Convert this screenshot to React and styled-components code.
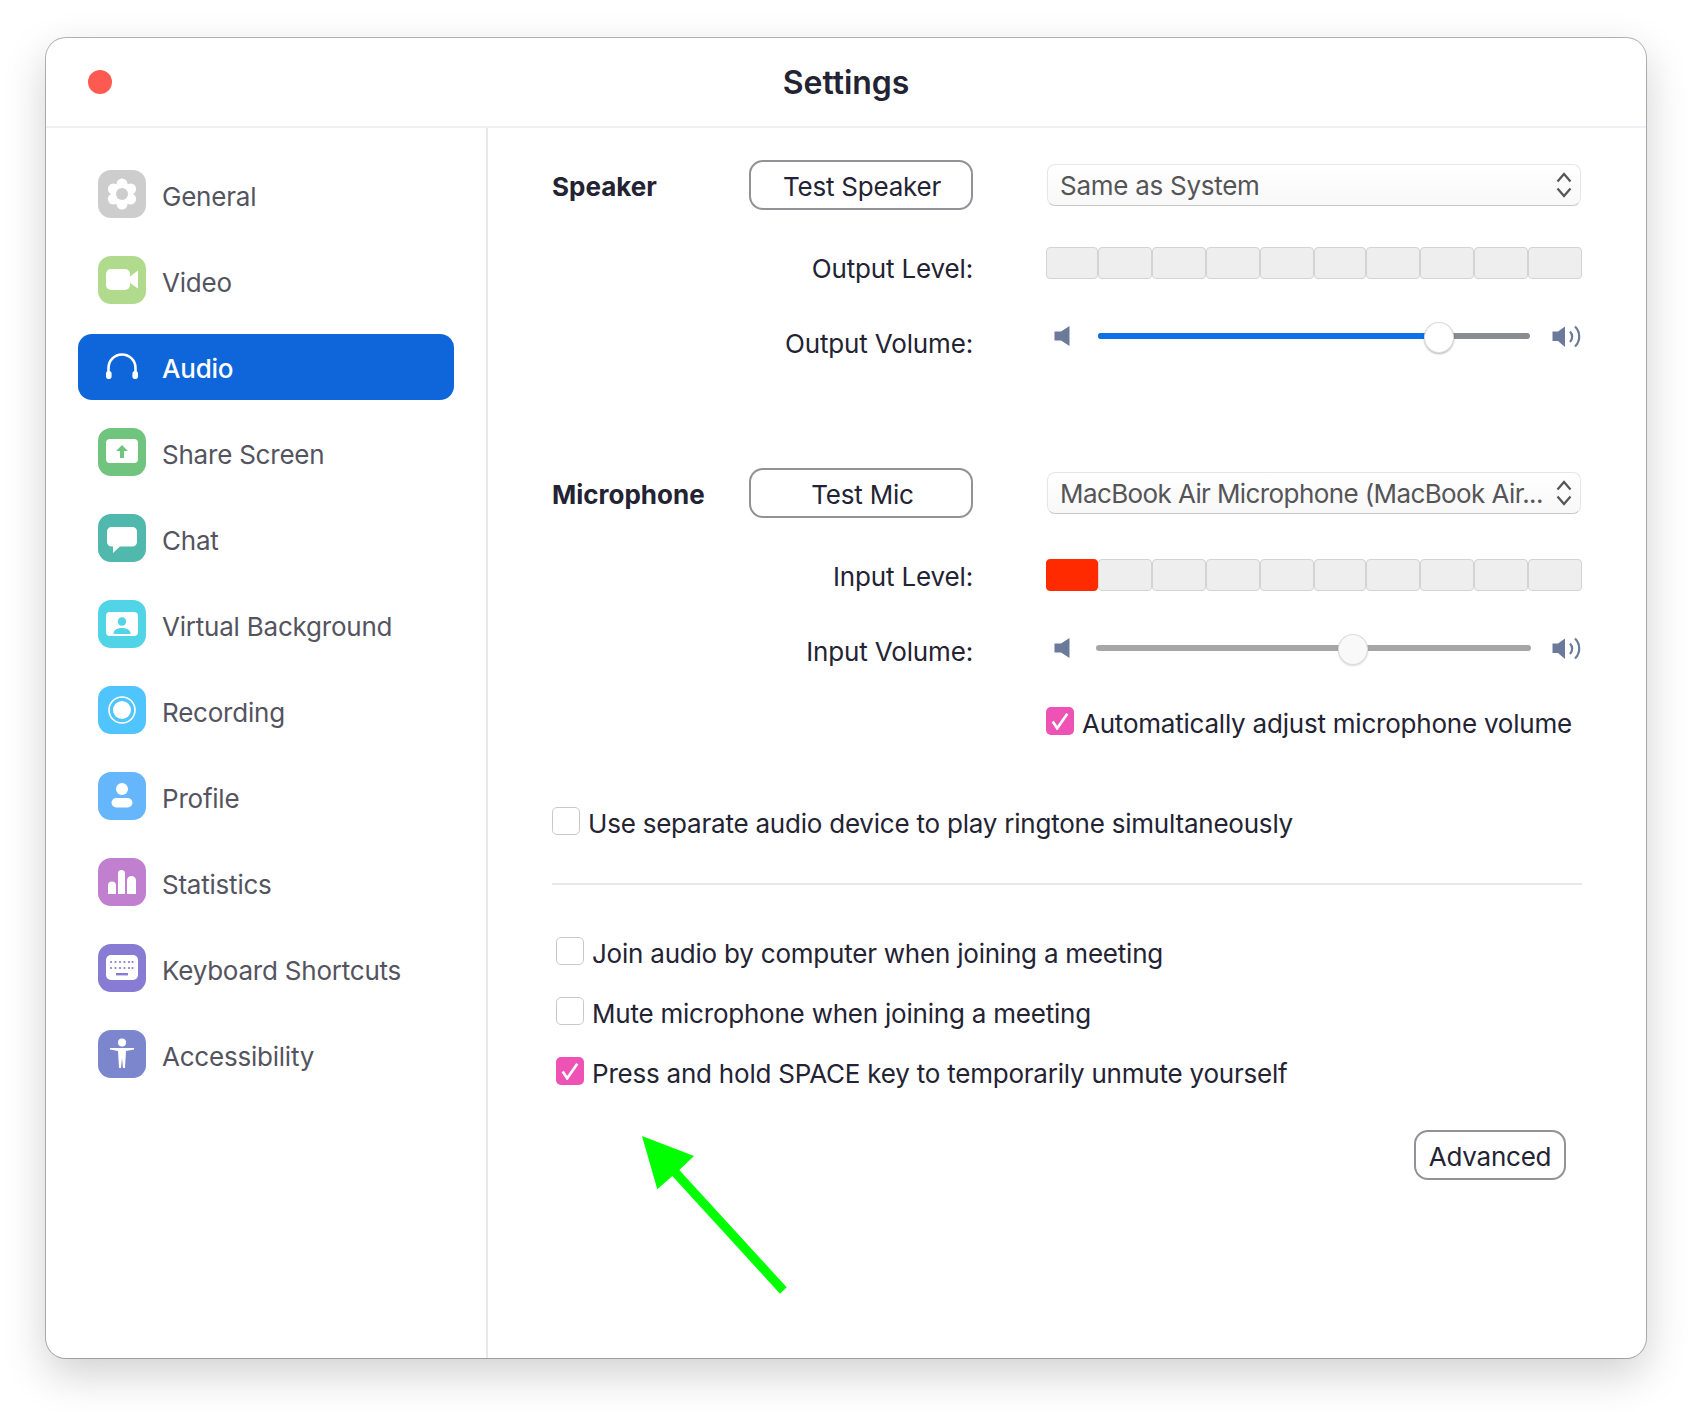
import React from 'react'
import styled, { createGlobalStyle } from 'styled-components'

const GlobalStyle = createGlobalStyle`
  html, body {
    margin: 0;
    padding: 0;
    background: #fff;
  }
  body {
    font-family: Inter, "Noto Sans", sans-serif;
    -webkit-font-smoothing: antialiased;
  }
`

const Page = styled.div`
  position: relative;
  width: 1692px;
  height: 1412px;
  padding: 38px 0 0 46px;
  box-sizing: border-box;
  overflow: hidden;
`

const Window = styled.div`
  width: 1600px;
  height: 1320px;
  background: #fff;
  border-radius: 20px;
  box-shadow: 0 0 0 1px rgba(0, 0, 0, 0.28), 0 16px 44px rgba(0, 0, 0, 0.19);
  display: flex;
  flex-direction: column;
`

const TitleBar = styled.header`
  position: relative;
  height: 88px;
  flex: none;
  border-bottom: 2px solid #eef0f3;
  display: flex;
  align-items: center;
  justify-content: center;
`

const CloseDot = styled.span`
  position: absolute;
  left: 42px;
  top: 32px;
  width: 24px;
  height: 24px;
  border-radius: 50%;
  background: #fe5a52;
`

const Title = styled.h1`
  margin: 0;
  font-size: 32px;
  font-weight: 600;
  letter-spacing: -0.05px;
  color: #232333;
`

const Body = styled.div`
  flex: 1;
  display: flex;
  min-height: 0;
`

const Sidebar = styled.nav`
  width: 442px;
  flex: none;
  box-sizing: border-box;
  border-right: 2px solid #e8e8ea;
  padding: 33px 0 0 32px;
  display: flex;
  flex-direction: column;
  gap: 20px;
`

const NavItem = styled.div`
  width: 376px;
  height: 66px;
  box-sizing: border-box;
  padding-left: 20px;
  display: flex;
  align-items: center;
  gap: 16px;
  border-radius: 14px;
  margin: ${(p) => (p.$active ? '1px 0 -1px' : '0')};
  background: ${(p) => (p.$active ? '#0e66da' : 'transparent')};
  color: ${(p) => (p.$active ? '#fff' : '#54545f')};
  font-size: 26px;
  letter-spacing: -0.22px;
  font-weight: ${(p) => (p.$active ? 500 : 400)};
`

const NavLabel = styled.span`
  padding-top: ${(p) => (p.$active ? 2 : 4)}px;
`

const IconTile = styled.svg`
  width: 48px;
  height: 48px;
  flex: none;
  display: block;
`

const Content = styled.main`
  flex: 1;
  box-sizing: border-box;
  padding: 32px 64px 0 64px;
  display: flex;
  flex-direction: column;
  color: #232333;
`

const Row = styled.div`
  display: grid;
  grid-template-columns: 421px 536px;
  column-gap: 73px;
  align-items: center;
  margin-top: ${(p) => p.$top || 0}px;
  height: ${(p) => p.$height || 32}px;
`

const DeviceHead = styled.div`
  display: flex;
  align-items: center;
  justify-content: space-between;
`

const DeviceName = styled.span`
  padding-top: 2px;
  font-size: 26px;
  font-weight: 700;
  letter-spacing: 0;
  color: #232333;
`

const OutlineButton = styled.button`
  box-sizing: border-box;
  width: ${(p) => p.$width}px;
  height: 50px;
  padding: 3px 0 0 ${(p) => p.$inset || 0}px;
  background: #fff;
  border: 2px solid #919197;
  border-radius: 14px;
  font-family: inherit;
  font-size: 26px;
  letter-spacing: -0.22px;
  color: #232333;
`

const FieldLabel = styled.span`
  text-align: right;
  line-height: 16px;
  padding-top: ${(p) => p.$shift}px;
  font-size: 26px;
  letter-spacing: -0.15px;
  color: #232333;
`

const Select = styled.div`
  box-sizing: border-box;
  width: 534px;
  height: 42px;
  margin-left: 1px;
  padding: 0 8px 0 12px;
  display: flex;
  align-items: center;
  justify-content: space-between;
  background: linear-gradient(#fff, #f8f8f8);
  border: 1px solid #e6e6e6;
  border-bottom-color: #c8c8c8;
  border-radius: 8px;
  font-size: 26px;
  letter-spacing: ${(p) => p.$spacing}px;
  color: #555558;
  white-space: nowrap;
`

const Chevrons = styled.svg`
  width: 16px;
  height: 26px;
  flex: none;
`

const Meter = styled.div`
  display: grid;
  grid-template-columns: 52fr 54fr 54fr 54fr 54fr 52fr 54fr 54fr 54fr 54fr;
  height: 32px;
`

const Segment = styled.div`
  box-sizing: border-box;
  border: 1.5px solid ${(p) => (p.$lit ? '#ff2a00' : '#d3d3d3')};
  border-radius: 4px;
  background: ${(p) => (p.$lit ? '#ff2a00' : '#eeeeee')};
`

const VolumeRow = styled.div`
  display: flex;
  align-items: center;
  height: 32px;
  padding-left: 8px;
`

const SpeakerIcon = styled.svg`
  width: ${(p) => p.$width}px;
  height: 24px;
  flex: none;
  margin-left: ${(p) => (p.$end ? 'auto' : '0')};
`

const Slider = styled.div`
  position: relative;
  width: ${(p) => p.$width}px;
  height: 6px;
  margin-left: ${(p) => p.$offset}px;
  border-radius: 3px;
  background: ${(p) => p.$track};
`

const SliderFill = styled.div`
  height: 100%;
  border-radius: 3px;
  background: #0e71eb;
`

const SliderThumb = styled.div`
  position: absolute;
  top: 50%;
  box-sizing: border-box;
  width: 30px;
  height: 31px;
  margin: -14px 0 0 -15px;
  border-radius: 50%;
  background: ${(p) => (p.$muted ? '#f9f9f9' : '#fff')};
  border: 1px solid #dcdcdc;
  box-shadow: 0 1px 2px rgba(0, 0, 0, ${(p) => (p.$muted ? 0.14 : 0.28)});
`

const CheckRow = styled.label`
  display: flex;
  align-items: center;
  gap: 8px;
  height: 28px;
  margin-top: ${(p) => p.$top || 0}px;
  margin-left: ${(p) => p.$indent || 0}px;
  font-size: 26px;
  letter-spacing: -0.22px;
  color: #232333;
  white-space: nowrap;
`

const CheckText = styled.span`
  padding-top: 5px;
`

const Box = styled.span`
  box-sizing: border-box;
  width: 28px;
  height: 28px;
  flex: none;
  display: flex;
  align-items: center;
  justify-content: center;
  border-radius: 5px;
  background: ${(p) => (p.$checked ? '#ee52b4' : '#fff')};
  border: ${(p) => (p.$checked ? 'none' : '1.5px solid #c9c9c9')};
`

const Divider = styled.hr`
  width: 100%;
  height: 2px;
  margin: 48px 0 0;
  border: 0;
  background: #e8e8e8;
`

const Footer = styled.div`
  display: flex;
  justify-content: flex-end;
  margin-top: 45px;
  padding-right: 16px;
`

const Annotation = styled.svg`
  position: absolute;
  left: 0;
  top: 0;
  width: 1692px;
  height: 1412px;
  pointer-events: none;
`

const tiles = {
  general: (
    <>
      <rect width="48" height="48" rx="13" fill="#cdcdcd" />
      <g fill="#fff">
        <circle cx="24" cy="14" r="5.5" />
        <circle cx="24" cy="34" r="5.5" />
        <circle cx="15.4" cy="19" r="5.5" />
        <circle cx="32.6" cy="19" r="5.5" />
        <circle cx="15.4" cy="29" r="5.5" />
        <circle cx="32.6" cy="29" r="5.5" />
        <circle cx="24" cy="24" r="11" />
      </g>
      <circle cx="24" cy="24" r="6" fill="#cdcdcd" />
    </>
  ),
  video: (
    <>
      <rect width="48" height="48" rx="13" fill="#b0da8c" />
      <rect x="8" y="13" width="24" height="21" rx="5" fill="#fff" />
      <path d="M32 20.5 40 14.5V32.5L32 27z" fill="#fff" />
    </>
  ),
  audio: (
    <>
      <path d="M10.5 31V25a13.5 13.5 0 0 1 27 0v6" fill="none" stroke="#fff" strokeWidth="2.6" />
      <rect x="8" y="28" width="5.6" height="8" rx="2.8" fill="#fff" />
      <rect x="34.4" y="28" width="5.6" height="8" rx="2.8" fill="#fff" />
    </>
  ),
  share: (
    <>
      <rect width="48" height="48" rx="13" fill="#70c47d" />
      <rect x="8" y="11" width="32" height="24" rx="4" fill="#fff" />
      <path d="M24 17 30 23H26V30H22V23H18z" fill="#70c47d" />
    </>
  ),
  chat: (
    <>
      <rect width="48" height="48" rx="13" fill="#50b8ac" />
      <path d="M13.500 13H34.500a4.500 4.500 0 0 1 4.500 4.500V28a4.500 4.500 0 0 1-4.500 4.500H22L15 39V32.500H13.500A4.500 4.500 0 0 1 9 28V17.500A4.500 4.500 0 0 1 13.500 13z" fill="#fff" />
    </>
  ),
  background: (
    <>
      <rect width="48" height="48" rx="13" fill="#50d4e6" />
      <rect x="8" y="12" width="32" height="24" rx="4" fill="#fff" />
      <circle cx="24" cy="21.500" r="4.200" fill="#50d4e6" />
      <path d="M15.500 34c0-4 3.500-6 8.500-6s8.500 2 8.500 6z" fill="#50d4e6" />
    </>
  ),
  recording: (
    <>
      <rect width="48" height="48" rx="13" fill="#50c4fc" />
      <circle cx="24" cy="24" r="13" fill="none" stroke="#fff" strokeWidth="1.600" />
      <circle cx="24" cy="24" r="9" fill="#fff" />
    </>
  ),
  profile: (
    <>
      <rect width="48" height="48" rx="13" fill="#66b6fb" />
      <circle cx="24" cy="17" r="6" fill="#fff" />
      <rect x="13.500" y="26" width="21" height="9.500" rx="4.750" fill="#fff" />
    </>
  ),
  statistics: (
    <>
      <rect width="48" height="48" rx="13" fill="#c180cf" />
      <path d="M10 36V27.500a4 4 0 0 1 8 0V36zM20 36V15.500a3.500 3.500 0 0 1 7 0V36zM29 36V22.500a4.500 4.500 0 0 1 9 0V36z" fill="#fff" />
    </>
  ),
  keyboard: (
    <>
      <rect width="48" height="48" rx="13" fill="#877bd4" />
      <rect x="8" y="11" width="32" height="25" rx="5" fill="#fff" />
      <g fill="#877bd4">
        {[13, 17.500, 22, 26.500, 31, 34.500].map((x) => (
          <React.Fragment key={x}>
            <circle cx={x} cy="18" r="1.100" />
            <circle cx={x} cy="24" r="1.100" />
          </React.Fragment>
        ))}
        <rect x="18" y="29" width="12" height="2.400" />
      </g>
    </>
  ),
  accessibility: (
    <>
      <rect width="48" height="48" rx="13" fill="#7b86cd" />
      <circle cx="24" cy="12.500" r="4" fill="#fff" />
      <path d="M12 18H36V19.500L28 21 27 38H25L24 28 23 38H21L20 21 12 19.500z" fill="#fff" />
    </>
  ),
}

const navItems = [
  ['general', 'General'],
  ['video', 'Video'],
  ['audio', 'Audio'],
  ['share', 'Share Screen'],
  ['chat', 'Chat'],
  ['background', 'Virtual Background'],
  ['recording', 'Recording'],
  ['profile', 'Profile'],
  ['statistics', 'Statistics'],
  ['keyboard', 'Keyboard Shortcuts'],
  ['accessibility', 'Accessibility'],
]

const LowSpeaker = () => (
  <SpeakerIcon $width={16} viewBox="0 0 16 24">
    <path d="M0.500 7.500H7L15.500 2V22L7 16.500H0.500z" fill="#6b7a99" />
  </SpeakerIcon>
)

const HighSpeaker = () => (
  <SpeakerIcon $width={30} $end viewBox="0 0 30 24">
    <path d="M0.500 7.500H6L13 2.500V23L6 17H0.500z" fill="#6b7a99" />
    <path d="M18 7.500a7.500 7.500 0 0 1 0 10.500M23 2.500a14 14 0 0 1 0 20" fill="none" stroke="#6b7a99" strokeWidth="2.200" />
  </SpeakerIcon>
)

const Check = () => (
  <svg width="18" height="18" viewBox="0 0 16 16">
    <path d="M1.500 8.500 5.500 14.500 14.500 1.500" fill="none" stroke="#fff" strokeWidth="2.400" />
  </svg>
)

const SelectArrows = () => (
  <Chevrons viewBox="0 0 16 26">
    <path d="M1.500 9.500 8 2l6.500 7.500M1.500 16.500 8 24l6.500-7.500" fill="none" stroke="#555558" strokeWidth="2.200" />
  </Chevrons>
)

const LevelMeter = ({ lit = 0 }) => (
  <Meter>
    {Array.from({ length: 10 }, (_, i) => (
      <Segment key={i} $lit={i < lit} />
    ))}
  </Meter>
)

const Volume = ({ width, offset, percent, track, filled }) => (
  <VolumeRow>
    <LowSpeaker />
    <Slider $width={width} $offset={offset} $track={track}>
      {filled && <SliderFill style={{ width: `${percent}%` }} />}
      <SliderThumb $muted={!filled} style={{ left: `${percent}%` }} />
    </Slider>
    <HighSpeaker />
  </VolumeRow>
)

const App = () => (
  <Page>
    <GlobalStyle />
    <Window>
      <TitleBar>
        <CloseDot />
        <Title>Settings</Title>
      </TitleBar>
      <Body>
        <Sidebar>
          {navItems.map(([key, label]) => (
            <NavItem key={key} $active={key === 'audio'}>
              <IconTile viewBox="0 0 48 48">{tiles[key]}</IconTile>
              <NavLabel $active={key === 'audio'}>{label}</NavLabel>
            </NavItem>
          ))}
        </Sidebar>
        <Content>
          <Row $height={50}>
            <DeviceHead>
              <DeviceName>Speaker</DeviceName>
              <OutlineButton $width={224} $inset={2}>Test Speaker</OutlineButton>
            </DeviceHead>
            <Select $spacing={-0.27}>
              Same as System
              <SelectArrows />
            </Select>
          </Row>
          <Row $top={37}>
            <FieldLabel $shift={11}>Output Level:</FieldLabel>
            <LevelMeter />
          </Row>
          <Row $top={41}>
            <FieldLabel $shift={15}>Output Volume:</FieldLabel>
            <Volume width={432} offset={28} percent={79} track="#8a8a92" filled />
          </Row>
          <Row $top={116} $height={50}>
            <DeviceHead>
              <DeviceName>Microphone</DeviceName>
              <OutlineButton $width={224} $inset={3}>Test Mic</OutlineButton>
            </DeviceHead>
            <Select $spacing={-0.6}>
              MacBook Air Microphone (MacBook Air...
              <SelectArrows />
            </Select>
          </Row>
          <Row $top={41}>
            <FieldLabel $shift={4}>Input Level:</FieldLabel>
            <LevelMeter lit={1} />
          </Row>
          <Row $top={41}>
            <FieldLabel $shift={7}>Input Volume:</FieldLabel>
            <Volume width={435} offset={26} percent={59} track="#a6a6a6" />
          </Row>
          <Row $top={43} $height={28}>
            <span />
            <CheckRow>
              <Box $checked>
                <Check />
              </Box>
              <CheckText>Automatically adjust microphone volume</CheckText>
            </CheckRow>
          </Row>
          <CheckRow $top={72}>
            <Box />
            <CheckText>Use separate audio device to play ringtone simultaneously</CheckText>
          </CheckRow>
          <Divider />
          <CheckRow $top={52} $indent={4}>
            <Box />
            <CheckText>Join audio by computer when joining a meeting</CheckText>
          </CheckRow>
          <CheckRow $top={32} $indent={4}>
            <Box />
            <CheckText>Mute microphone when joining a meeting</CheckText>
          </CheckRow>
          <CheckRow $top={32} $indent={4}>
            <Box $checked>
              <Check />
            </Box>
            <CheckText>Press and hold SPACE key to temporarily unmute yourself</CheckText>
          </CheckRow>
          <Footer>
            <OutlineButton $width={152}>Advanced</OutlineButton>
          </Footer>
        </Content>
      </Body>
    </Window>
    <Annotation viewBox="0 0 1692 1412">
      <polygon
        points="642,1136 694,1156 679.300,1170 786.700,1287.300 780,1293.700 672.300,1176 657.300,1189.300"
        fill="#00ff00"
      />
    </Annotation>
  </Page>
)

export default App
